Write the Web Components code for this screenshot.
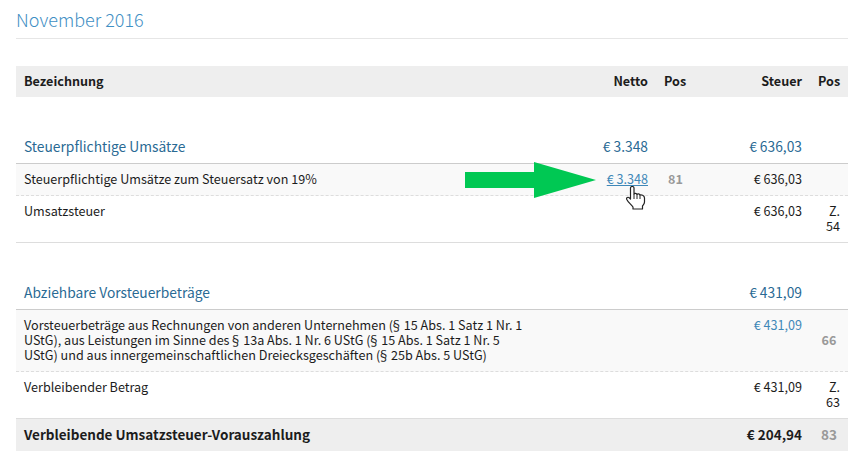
<!DOCTYPE html>
<html lang="de">
<head>
<meta charset="utf-8">
<title>November 2016</title>
<style>
	html, body { margin: 0; background: #fff; }
	body {
		font-family: "Noto Sans CJK KR", "Liberation Sans", sans-serif;
		font-size: 12.6px;
		color: #1c1c1c;
		padding: 0 19px 0 16px;
	}
</style>
</head>
<body>
<month-title>November 2016</month-title>
<tax-row kind="head">
	<span slot="label">Bezeichnung</span>
	<span slot="netto">Netto</span>
	<span slot="npos">Pos</span>
	<span slot="steuer">Steuer</span>
	<span slot="spos">Pos</span>
</tax-row>
<tax-row kind="section" style="margin-top: 34px">
	<span slot="label">Steuerpflichtige Umsätze</span>
	<span slot="netto">€ 3.348</span>
	<span slot="steuer">€ 636,03</span>
</tax-row>
<tax-row kind="shaded">
	<span slot="label">Steuerpflichtige Umsätze zum Steuersatz von 19%</span>
	<tax-link slot="netto">€ 3.348</tax-link>
	<b slot="npos">81</b>
	<span slot="steuer">€ 636,03</span>
	<green-arrow></green-arrow>
	<hand-cursor></hand-cursor>
</tax-row>
<tax-row kind="plain">
	<span slot="label">Umsatzsteuer</span>
	<span slot="steuer">€ 636,03</span>
	<span slot="spos">Z. 54</span>
</tax-row>
<tax-row kind="section" style="margin-top: 34px">
	<span slot="label">Abziehbare Vorsteuerbeträge</span>
	<span slot="steuer">€ 431,09</span>
</tax-row>
<tax-row kind="shaded">
	<span slot="label">Vorsteuerbeträge aus Rechnungen von anderen Unternehmen (</span><span slot="label" class="para">§</span><span slot="label"> 15 Abs. 1 Satz 1 Nr. 1</span><br slot="label"><span slot="label">UStG), aus Leistungen im Sinne des </span><span slot="label" class="para">§</span><span slot="label"> 13a Abs. 1 Nr. 6 UStG (</span><span slot="label" class="para">§</span><span slot="label"> 15 Abs. 1 Satz 1 Nr. 5</span><br slot="label"><span slot="label">UStG) und aus innergemeinschaftlichen Dreiecksgeschäften (</span><span slot="label" class="para">§</span><span slot="label"> 25b Abs. 5 UStG)</span>
	<span slot="steuer" style="color: #3f88b8">€ 431,09</span>
	<b slot="spos">66</b>
</tax-row>
<tax-row kind="plain">
	<span slot="label">Verbleibender Betrag</span>
	<span slot="steuer">€ 431,09</span>
	<span slot="spos">Z. 63</span>
</tax-row>
<tax-row kind="total">
	<span slot="label">Verbleibende Umsatzsteuer-Vorauszahlung</span>
	<span slot="steuer">€ 204,94</span>
	<b slot="spos">83</b>
</tax-row>
<script>
class MonthTitle extends HTMLElement {
	constructor () {
		super();
		this.attachShadow({ mode: "open" }).innerHTML = `
			<style>
				:host {
					display: block;
					font-size: 18px;
					font-weight: 300;
					line-height: 26px;
					color: #3f8fc4;
					padding: 6px 0 6px;
					border-bottom: 1px solid #e6e6e6;
					margin-bottom: 27px;
				}
			</style>
			<slot></slot>
		`;
	}
}

class TaxRow extends HTMLElement {
	constructor () {
		super();
		this.attachShadow({ mode: "open" }).innerHTML = `
			<style>
				:host {
					display: grid;
					grid-template-columns: 520px 120px 39px 115px 38px;
					position: relative;
					line-height: 15px;
				}
				.cell { padding: 7px 8px 9px; }
				.num { text-align: right; }
				.last { align-self: center; }
				::slotted(b) {
					display: block;
					text-align: center;
					color: #999;
					font-weight: 700;
				}
				/* the CJK face draws the paragraph sign full width, pull it in */
				::slotted(.para) {
					margin-left: -3px;
					letter-spacing: -1.6px;
				}
				:host([kind="head"]) {
					background: #eee;
					font-weight: 700;
				}
				:host([kind="section"]) {
					font-size: 13.8px;
					color: #2a6a94;
					border-bottom: 1px solid #ccc;
				}
				:host([kind="section"]) .cell { padding: 8px 8px 9px; }
				:host([kind="shaded"]) {
					background: #f9f9f9;
					border-bottom: 1px dashed #ddd;
				}
				:host([kind="plain"]) {
					border-bottom: 1px solid #ddd;
				}
				:host([kind="total"]) {
					background: #eee;
					font-size: 13.5px;
					font-weight: 700;
				}
				:host([kind="total"]) .cell { padding: 8px 8px 9px; }
			</style>
			<div class="cell"><slot name="label"></slot></div>
			<div class="cell num"><slot name="netto"></slot></div>
			<div class="cell"><slot name="npos"></slot></div>
			<div class="cell num"><slot name="steuer"></slot></div>
			<div class="cell num last"><slot name="spos"></slot></div>
			<slot></slot>
		`;
	}
}

class TaxLink extends HTMLElement {
	constructor () {
		super();
		this.attachShadow({ mode: "open" }).innerHTML = `
			<style>
				:host { color: #3f88b8; text-decoration: underline; }
			</style>
			<slot></slot>
		`;
	}
}

class GreenArrow extends HTMLElement {
	constructor () {
		super();
		this.attachShadow({ mode: "open" }).innerHTML = `
			<style>
				:host { position: absolute; left: 449px; top: -2px; width: 131px; height: 36px; }
				svg { display: block; }
			</style>
			<svg width="131" height="36" viewBox="0 0 131 36">
				<path d="M0 10H69V0L131 18 69 36V26H0Z" fill="#00c853"/>
			</svg>
		`;
	}
}

class HandCursor extends HTMLElement {
	constructor () {
		super();
		this.attachShadow({ mode: "open" }).innerHTML = `
			<style>
				:host { position: absolute; left: 610px; top: 22px; width: 20px; height: 24px; }
				svg { display: block; }
			</style>
			<svg width="20" height="24" viewBox="0 0 20 24">
				<path d="M4.500 13V2C4.500 0 8 0 8 2V8C8.500 7 10.500 7 11 8.500 11.500 7.500 13.500 7.500 14 9 15 8.500 18.500 9 18.500 12V16C18.500 18 17 19 16.500 20V23H7V21C5 18 2.500 17 .8 13.500 0 11.500 2 10.500 3.500 12Z" fill="#fff" stroke="#222" stroke-width="1.200" stroke-linejoin="round"/>
				<path d="M8 8V13M11 8.500V13M14 9V13" fill="none" stroke="#222"/>
			</svg>
		`;
	}
}

customElements.define("month-title", MonthTitle);
customElements.define("tax-row", TaxRow);
customElements.define("tax-link", TaxLink);
customElements.define("green-arrow", GreenArrow);
customElements.define("hand-cursor", HandCursor);
</script>
</body>
</html>
